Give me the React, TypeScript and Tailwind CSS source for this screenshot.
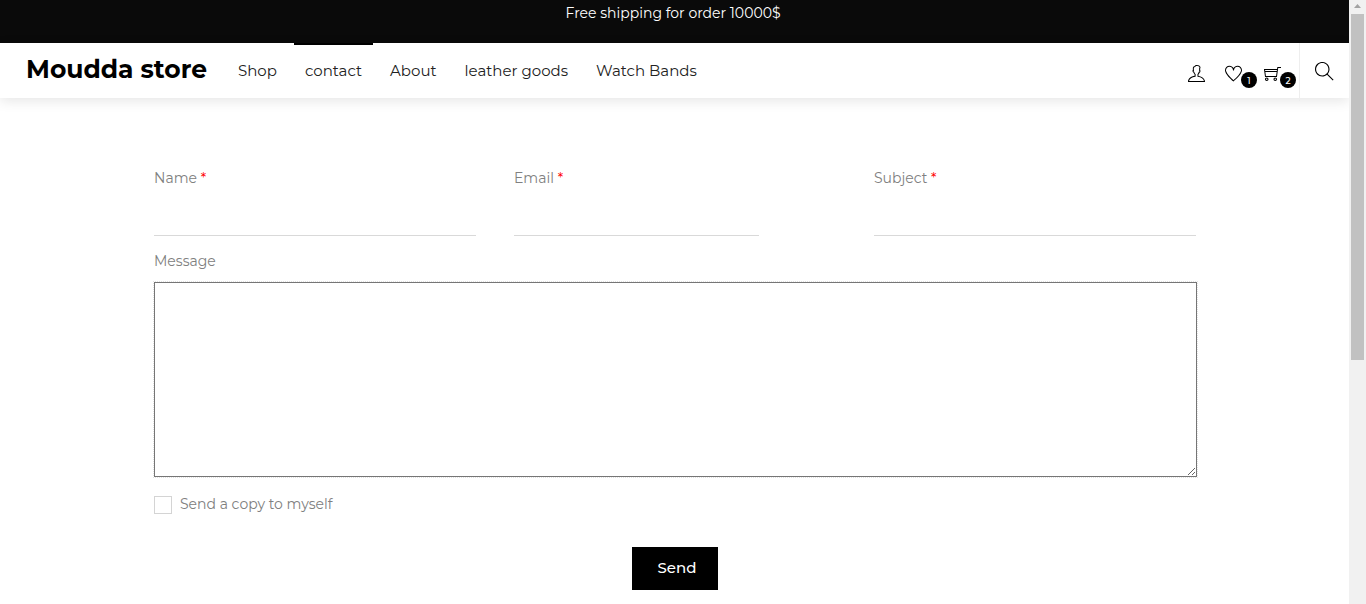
import { TfiHeart, TfiSearch, TfiShoppingCart, TfiUser } from "react-icons/tfi";

const links = [
  { label: "Shop" },
  { label: "contact", active: true },
  { label: "About" },
  { label: "leather goods" },
  { label: "Watch Bands" },
];

function Header() {
  return (
    <header className="flex h-[55px] shrink-0 items-stretch bg-white pl-[26px] shadow-[0_3px_12px_rgba(0,0,0,0.1)]">
      <a href="#home" className="mr-[20px] pt-[6px] text-[25px] leading-[40px] font-bold whitespace-nowrap text-black">
        Moudda store
      </a>
      <nav className="flex gap-[6px]">
        {links.map((link) => (
          <a
            key={link.label}
            href="#nav"
            className={
              "border-t-2 px-[11px] pt-[14px] text-[15px] leading-[24px] whitespace-nowrap text-[#222] " +
              (link.active ? "border-black" : "border-transparent")
            }
          >
            {link.label}
          </a>
        ))}
      </nav>
      <div className="ml-auto flex text-black">
        <a href="#account" aria-label="Account" className="mr-[20px] pt-[22px]">
          <TfiUser size={17} />
        </a>
        <a href="#wishlist" aria-label="Wishlist, 1 item" className="mr-[7px] flex pt-[22px]">
          <TfiHeart size={17} />
          <Badge count="1" />
        </a>
        <a href="#cart" aria-label="Cart, 2 items" className="mr-[3px] flex pt-[22px]">
          <TfiShoppingCart size={17} />
          <Badge count="2" />
        </a>
        <button type="button" aria-label="Search" className="flex h-[58px] items-start border-l border-[#eee] px-[15px] pt-[19px]">
          <TfiSearch size={19} />
        </button>
      </div>
    </header>
  );
}

function Badge({ count }: { count: string }) {
  return (
    <span className="-ml-px mt-[7px] flex size-4 items-center justify-center rounded-full bg-black text-[9px] leading-none font-medium text-white">
      {count}
    </span>
  );
}

function Field({ id, label, narrow }: { id: string; label: string; narrow?: boolean }) {
  return (
    <div>
      <label htmlFor={id} className="block">
        {label} <span className="text-[#f00]">*</span>
      </label>
      <input
        id={id}
        type="text"
        className={"mt-[4px] block h-[42px] border-b border-[#d9d9d9] outline-none " + (narrow ? "w-[245px]" : "w-full")}
      />
    </div>
  );
}

function ContactForm() {
  return (
    <form className="pt-[68px] pr-[152px] pl-[154px] text-[14px] leading-[24px] text-[#808080]">
      <div className="grid grid-cols-3 gap-x-[38px] pr-px">
        <Field id="name" label="Name" />
        <Field id="email" label="Email" narrow />
        <Field id="subject" label="Subject" />
      </div>
      <label htmlFor="message" className="mt-[13px] block">
        Message
      </label>
      <textarea
        id="message"
        className="mt-[9px] block h-[195px] w-full resize border border-[#767676] outline-1 outline-dotted outline-[#e2e2e2]"
      />
      <div className="mt-[15px] flex items-center gap-2">
        <input id="copy" type="checkbox" className="mt-[2px] size-[18px] appearance-none border border-[#d4d4d4]" />
        <label htmlFor="copy">Send a copy to myself</label>
      </div>
      <div className="mt-[31px] flex justify-center pr-px">
        <button type="button" className="h-[43px] w-[86px] bg-black pb-[2px] pl-[4px] text-[15px] font-medium text-white">
          Send
        </button>
      </div>
    </form>
  );
}

function ScrollTrack() {
  return (
    <div aria-hidden="true" className="flex w-[17px] shrink-0 flex-col items-center bg-[#f1f1f1]">
      <svg viewBox="0 0 17 14" className="h-[14px] w-[17px]">
        <path d="M5 8 8.5 4 12 8Z" fill="#a3a3a3" />
      </svg>
      <div className="h-[346px] w-[13px] bg-[#c1c1c1]" />
    </div>
  );
}

export default function App() {
  return (
    <div className="flex min-h-screen bg-white font-['Montserrat','Inter',sans-serif]">
      <div className="flex min-w-0 flex-1 flex-col">
        <div className="h-[43px] bg-[#0a0a0a] pt-px pr-[3px] text-center text-[14px] leading-[24px] text-white">
          Free shipping for order 10000$
        </div>
        <Header />
        <main>
          <ContactForm />
        </main>
      </div>
      <ScrollTrack />
    </div>
  );
}
